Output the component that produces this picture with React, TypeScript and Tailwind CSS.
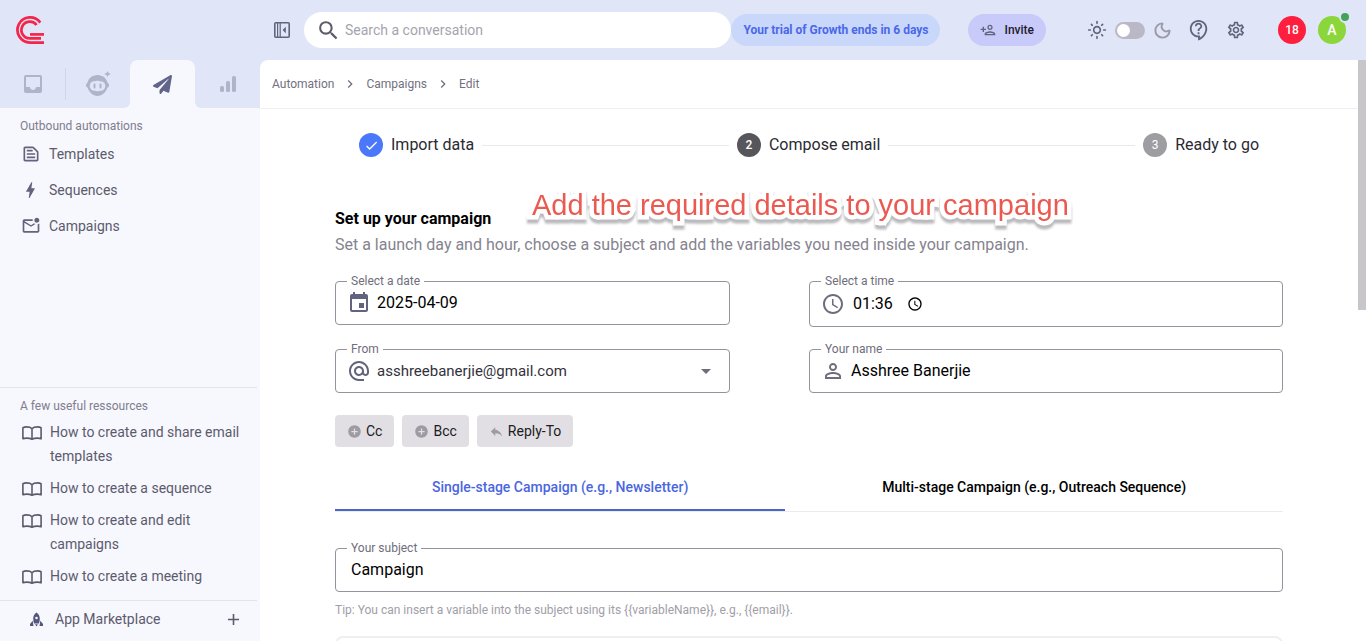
import React, { useState } from 'react';
import {
  MdAccessTime,
  MdAdd,
  MdAddCircle,
  MdAlternateEmail,
  MdArrowDropDown,
  MdBolt,
  MdCheck,
  MdChevronRight,
  MdEvent,
  MdInbox,
  MdOutlineContactSupport,
  MdOutlineLightMode,
  MdOutlineMarkEmailUnread,
  MdOutlinePersonAdd,
  MdOutlineSettings,
  MdOutlineTextSnippet,
  MdPersonOutline,
  MdReply,
  MdSearch,
} from 'react-icons/md';
import { FaPaperPlane } from 'react-icons/fa';
import { Moon } from 'lucide-react';

const Logo = () => (
  <svg width="28" height="28" viewBox="0 0 28 28" fill="none" stroke="#f5254a" strokeWidth="2.7">
    <path d="M24.3 6.600A12.600 12.600 0 1 0 14 26.600H28" />
    <path d="M20.600 9A8.400 8.400 0 1 0 14 22.400H25" />
    <path d="M14 18.400H28" />
  </svg>
);

const RobotIcon = () => (
  <svg width="26" height="26" viewBox="0 0 26 26" fill="currentColor">
    <path
      fillRule="evenodd"
      d="M12.5 4C17.6 4 22 7.6 22.6 12c1 .3 1.4 1 1.4 2.3s-.5 2.1-1.6 2.3C21 21.3 17.2 25 12.5 25s-8.5-3.7-9.9-8.4C1.5 16.4 1 15.6 1 14.3S1.5 12.3 2.4 12C3 7.6 7.4 4 12.5 4Zm-3 6.2a4.8 4.8 0 0 0 0 9.6c1.2 0 1.8.5 3 .5s1.8-.5 3-.5a4.8 4.8 0 0 0 0-9.6c-1.2 0-1.8-.5-3-.5s-1.8.5-3 .5Z"
    />
    <rect x="8.5" y="12.5" width="2" height="5" rx="1" />
    <rect x="14.5" y="12.5" width="2" height="5" rx="1" />
    <path d="M22.5 0l1 2 2.500 1-2.500 1-1 2-1-2-2.500-1 2.500-1z" />
  </svg>
);

const BarsIcon = () => (
  <svg width="16" height="16" viewBox="0 0 16 16" fill="currentColor">
    <rect x="0" y="10" width="4" height="6" rx="1.5" />
    <rect x="6" y="5" width="4" height="11" rx="1.5" />
    <rect x="12" y="0" width="4" height="16" rx="1.5" />
  </svg>
);

const CollapseIcon = () => (
  <svg width="16" height="16" viewBox="0 0 16 16" fill="none" stroke="currentColor" strokeWidth="1.6">
    <rect x="0.8" y="0.8" width="14.4" height="14.4" rx="1" />
    <path d="M3.6 1v14M6.2 1v14" strokeWidth="1.2" />
    <path d="M11.8 4.8v6.4L8.6 8z" fill="currentColor" stroke="none" />
  </svg>
);

const BookIcon = () => (
  <svg width="20" height="14" viewBox="0 0 20 14" fill="none" stroke="currentColor" strokeWidth="1.6" strokeLinejoin="round">
    <path d="M10 2.6C8.5 1.2 6.3.9 4.5.9 3 .9 1.8 1.2.9 1.7v11.1c1-.5 2.2-.7 3.6-.7 1.8 0 4 .2 5.5 1.1 1.5-.9 3.7-1.1 5.5-1.1 1.4 0 2.6.2 3.6.7V1.7C18.2 1.2 17 .9 15.5.9c-1.8 0-4 .3-5.5 1.7Zm0 0v10.5" />
  </svg>
);

const RocketIcon = () => (
  <svg width="13" height="15" viewBox="0 0 13 14" fill="currentColor">
    <path
      fillRule="evenodd"
      d="M6.5 0C8.8 1.6 9.8 3.8 9.8 6.2c0 1.8-.3 3.3-.9 4.8H4.1c-.6-1.5-.9-3-.9-4.8C3.2 3.8 4.2 1.6 6.5 0Zm0 4.2a1.3 1.3 0 1 0 0 2.6 1.3 1.3 0 0 0 0-2.6Z"
    />
    <path d="M5 11.7h3L6.5 14zM2.7 8.3 3.5 13.6H0V11.4zM10.3 8.3l-.8 5.3H13v-2.2z" />
  </svg>
);

const menu = [
  { label: 'Templates', icon: <MdOutlineTextSnippet size={20} /> },
  { label: 'Sequences', icon: <MdBolt size={22} /> },
  { label: 'Campaigns', icon: <MdOutlineMarkEmailUnread size={20} /> },
];

const resources = [
  'How to create and share email templates',
  'How to create a sequence',
  'How to create and edit campaigns',
  'How to create a meeting',
];

interface FieldProps {
  id: string;
  label: string;
  className?: string;
  children: React.ReactNode;
}

const Field: React.FC<FieldProps> = ({ id, label, className = 'h-11', children }) => (
  <div className={`relative flex items-center rounded border border-[#94929c] ${className}`}>
    <label htmlFor={id} className="absolute -top-[9px] left-[11px] bg-white px-1 text-xs leading-4 text-[#6f6d7c]">
      {label}
    </label>
    {children}
  </div>
);

const Header = () => (
  <header className="flex h-[60px] shrink-0 items-center pr-5">
    <div className="w-[260px] shrink-0 pl-4">
      <a href="#" aria-label="Home" className="block w-7">
        <Logo />
      </a>
    </div>
    <button aria-label="Collapse sidebar" className="ml-[14px] text-[#62637c]">
      <CollapseIcon />
    </button>
    <div className="ml-[14px] flex h-9 min-w-0 flex-1 items-center gap-1 rounded-full bg-white pl-3">
      <MdSearch size={25} className="shrink-0 text-[#5d5b6a]" />
      <input
        type="search"
        aria-label="Search a conversation"
        placeholder="Search a conversation"
        className="h-full min-w-0 flex-1 bg-transparent text-sm outline-none placeholder:text-[#a5a4ae]"
      />
    </div>
    <a href="#" className="flex h-8 shrink-0 items-center rounded-full bg-[#c9d7fb] px-3 text-xs font-bold text-[#4a68e8]">
      Your trial of Growth ends in 6 days
    </a>
    <button className="ml-7 flex h-8 shrink-0 items-center gap-2 rounded-full bg-[#c8caf9] px-3 text-xs font-medium text-[#1d1c2d]">
      <MdOutlinePersonAdd size={16} className="text-[#62637c]" />
      Invite
    </button>
    <div className="ml-[41px] flex shrink-0 items-center gap-2 text-[#62637c]">
      <MdOutlineLightMode size={20} />
      <input
        type="checkbox"
        role="switch"
        aria-label="Dark mode"
        className="flex h-[17px] w-[30px] appearance-none items-center rounded-full bg-[#bab8c6] px-[2px] before:size-[13px] before:rounded-full before:bg-white checked:justify-end"
      />
      <Moon size={19} strokeWidth={2.4} className="text-[#9b9aa8]" />
    </div>
    <button aria-label="Help" className="ml-4 text-[#62637c]">
      <MdOutlineContactSupport size={22} />
    </button>
    <button aria-label="Settings" className="ml-4 text-[#62637c]">
      <MdOutlineSettings size={20} />
    </button>
    <button className="ml-8 size-7 shrink-0 rounded-full bg-[#fd1f3d] text-xs font-medium text-white">18</button>
    <button className="relative ml-3 size-7 shrink-0 rounded-full bg-[#8bd63a] text-sm font-medium text-white">
      A
      <span className="absolute -top-[5px] -right-[5px] size-3 rounded-full border-2 border-[#e0e6f8] bg-[#43a35c]" />
    </button>
  </header>
);

const Sidebar = () => (
  <aside className="flex w-[260px] shrink-0 flex-col bg-[#f7f7fe]">
    <nav aria-label="Sections" className="grid h-12 shrink-0 grid-cols-4 text-[#b0b4ca]">
      <button aria-label="Inbox" className="flex items-center justify-center bg-[#e0e6f8]">
        <MdInbox size={24} />
      </button>
      <button aria-label="Bots" className="flex items-center rounded-br-md bg-[#e0e6f8]">
        <span className="h-8 w-px bg-[#d0d5ea]" />
        <span className="mx-auto">
          <RobotIcon />
        </span>
      </button>
      <div className="flex bg-[#e0e6f8]">
        <button aria-label="Automation" className="flex flex-1 items-center justify-center rounded-t-lg bg-[#f7f7fe] text-[#62648a]">
          <FaPaperPlane size={19} />
        </button>
      </div>
      <button aria-label="Statistics" className="flex items-center justify-center rounded-bl-md bg-[#e0e6f8]">
        <BarsIcon />
      </button>
    </nav>

    <div className="flex-1 pt-2.5">
      <h2 className="pb-0.5 pl-5 text-xs leading-4 text-[#7f7d8e]">Outbound automations</h2>
      <ul className="text-sm text-[#5c5b6c]">
        {menu.map((item) => (
          <li key={item.label}>
            <a href="#" className="flex h-9 items-center gap-2 pl-5">
              <span className="flex w-[21px] justify-center text-[#62637c]">{item.icon}</span>
              {item.label}
            </a>
          </li>
        ))}
      </ul>
    </div>

    <div className="mr-[3px] border-t border-[#e5e4ee] pt-2.5 pb-2">
      <h2 className="pb-0.5 pl-5 text-xs leading-4 text-[#7f7d8e]">A few useful ressources</h2>
      <ul className="text-sm leading-6 text-[#5c5b6c]">
        {resources.map((text) => (
          <li key={text}>
            <a href="#" className="flex gap-2 py-1 pr-3 pl-[22px]">
              <span className="shrink-0 pt-[6px]">
                <BookIcon />
              </span>
              {text}
            </a>
          </li>
        ))}
      </ul>
    </div>

    <div className="mr-[3px] flex h-[41px] shrink-0 items-center border-t border-[#e5e4ee] pr-[14px] pb-1 pl-[30px] text-sm text-[#5c5b6c]">
      <a href="#" className="flex flex-1 items-center gap-3">
        <span className="text-[#55567c]">
          <RocketIcon />
        </span>
        App Marketplace
      </a>
      <button aria-label="Add app">
        <MdAdd size={19} />
      </button>
    </div>
  </aside>
);

const Stepper = () => (
  <ol className="flex items-center gap-2 px-6 leading-6 text-[#2b2a33]">
    <li className="flex items-center gap-2">
      <span className="flex size-6 items-center justify-center rounded-full bg-[#4b78fb] text-white">
        <MdCheck size={15} />
      </span>
      Import data
    </li>
    <li role="presentation" className="h-px flex-1 bg-[#e9e8ec]" />
    <li aria-current="step" className="flex items-center gap-2">
      <span className="flex size-6 items-center justify-center rounded-full bg-[#57565b] text-xs font-medium text-white">2</span>
      Compose email
    </li>
    <li role="presentation" className="h-px flex-1 bg-[#e9e8ec]" />
    <li className="flex items-center gap-2">
      <span className="flex size-6 items-center justify-center rounded-full bg-[#9e9da1] text-xs text-white">3</span>
      Ready to go
    </li>
  </ol>
);

const App = () => {
  const [tab, setTab] = useState(0);
  const tabs = ['Single-stage Campaign (e.g., Newsletter)', 'Multi-stage Campaign (e.g., Outreach Sequence)'];

  return (
    <div className="flex h-screen flex-col overflow-hidden bg-[#e0e6f8] font-[Roboto,sans-serif]">
      <Header />
      <div className="flex min-h-0 flex-1">
        <Sidebar />
        <main className="flex min-w-0 flex-1 overflow-hidden rounded-tl-lg bg-white">
          <div className="min-w-0 flex-1">
            <nav aria-label="Breadcrumb" className="flex h-[49px] items-center gap-2 border-b border-[#efeef2] pl-3 text-xs text-[#73717f]">
              <a href="#">Automation</a>
              <MdChevronRight size={16} />
              <a href="#">Campaigns</a>
              <MdChevronRight size={16} />
              <a href="#">Edit</a>
            </nav>

            <div className="px-[75px] pt-6">
              <Stepper />

              <div className="relative mt-[50px]">
                <h1 className="text-base leading-6 font-bold text-black">Set up your campaign</h1>
                <p className="absolute -top-[18px] left-[197px] font-['Liberation_Sans',sans-serif] text-[29px] leading-8 whitespace-nowrap text-[#ea5a50] drop-shadow-[0_4px_1px_rgba(60,60,70,0.35)] [-webkit-text-stroke:9px_white] [paint-order:stroke_fill]">
                  Add the required details to your campaign
                </p>
              </div>
              <p className="mt-[2px] text-base leading-6 text-[#85838f]">
                Set a launch day and hour, choose a subject and add the variables you need inside your campaign.
              </p>

              <div className="mt-6 grid grid-cols-12 items-start gap-y-[22px]">
                <div className="col-span-5">
                  <Field id="date" label="Select a date">
                    <MdEvent size={24} className="ml-[11px] shrink-0 text-[#62637f]" />
                    <input id="date" defaultValue="2025-04-09" className="ml-1.5 min-w-0 flex-1 text-base text-black outline-none" />
                  </Field>
                </div>
                <div className="col-span-6 col-start-7">
                  <Field id="time" label="Select a time" className="h-[46px]">
                    <MdAccessTime size={24} className="ml-[11px] shrink-0 text-[#6f6d7c]" />
                    <input id="time" defaultValue="01:36" className="ml-2 w-12 text-base text-black outline-none" />
                    <button aria-label="Pick a time" className="ml-1.5 text-black">
                      <MdAccessTime size={16} />
                    </button>
                  </Field>
                </div>
                <div className="col-span-5">
                  <Field id="from" label="From">
                    <MdAlternateEmail size={24} className="ml-[11px] shrink-0 text-[#62637c]" />
                    <select id="from" className="ml-1.5 h-full min-w-0 flex-1 appearance-none text-[15px] text-[#33323c] outline-none">
                      <option>asshreebanerjie@gmail.com</option>
                    </select>
                    <MdArrowDropDown size={24} className="pointer-events-none absolute right-[11px] text-[#6f6d7c]" />
                  </Field>
                </div>
                <div className="col-span-6 col-start-7">
                  <Field id="name" label="Your name">
                    <MdPersonOutline size={24} className="ml-[11px] shrink-0 text-[#6f6d7c]" />
                    <input id="name" defaultValue="Asshree Banerjie" className="ml-1.5 min-w-0 flex-1 text-base text-black outline-none" />
                  </Field>
                </div>
              </div>

              <div className="mt-[22px] flex gap-2 text-sm text-[#1c1b1f]">
                <button className="flex h-8 items-center gap-1 rounded bg-[#e1dfe3] px-3">
                  <MdAddCircle size={15} className="text-[#9e9ca2]" />
                  Cc
                </button>
                <button className="flex h-8 items-center gap-1 rounded bg-[#e1dfe3] px-3">
                  <MdAddCircle size={15} className="text-[#9e9ca2]" />
                  Bcc
                </button>
                <button className="flex h-8 items-center gap-1 rounded bg-[#e1dfe3] px-3">
                  <MdReply size={15} className="text-[#9e9ca2]" />
                  Reply-To
                </button>
              </div>

              <div role="tablist" className="mt-4 flex border-b border-[#ecebf0] text-sm font-medium">
                {tabs.map((name, i) => (
                  <button
                    key={name}
                    role="tab"
                    aria-selected={tab === i}
                    onClick={() => setTab(i)}
                    className={`h-12 flex-auto border-b-2 pt-0.5 ${tab === i ? 'border-[#4a66c8] text-[#4a66e0]' : 'border-transparent text-black'}`}
                  >
                    {name}
                  </button>
                ))}
              </div>

              <div className="mt-9">
                <Field id="subject" label="Your subject">
                  <input id="subject" defaultValue="Campaign" className="ml-[15px] min-w-0 flex-1 text-base text-black outline-none" />
                </Field>
              </div>
              <p className="mt-2.5 text-xs leading-4 text-[#a09ea8]">
                Tip: You can insert a variable into the subject using its {'{{variableName}}'}, e.g., {'{{email}}'}.
              </p>
              <div className="mt-[18px] h-40 rounded-lg border-2 border-[#efeef2]" />
            </div>
          </div>
          <div aria-hidden="true" className="w-2 shrink-0">
            <div className="h-[43%] bg-[#c9c6cb]" />
          </div>
        </main>
      </div>
    </div>
  );
};

export default App;
